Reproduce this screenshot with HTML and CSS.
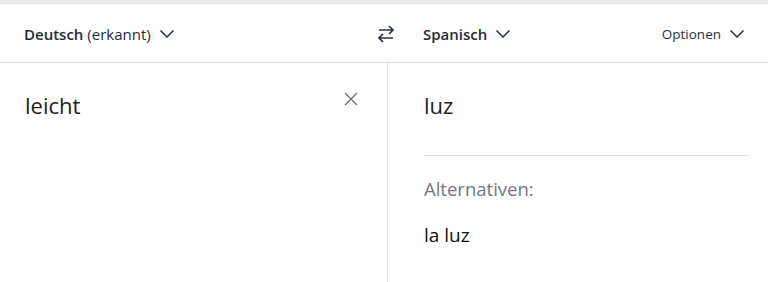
FILE: index.html
```html
<!DOCTYPE html>
<html lang="de">
<head>
<meta charset="utf-8">
<link rel="stylesheet" href="styles.css">
</head>
<body>
<div class="topbar"></div>
<header class="header">
  <div class="side left">
    <button class="lang"><span><b>Deutsch</b> (erkannt)</span>
      <svg class="chev" viewBox="0 0 16 16" width="16" height="16"><path d="M1.5 4.5 8 11l6.5-6.5" fill="none" stroke="currentColor" stroke-width="1.5"/></svg>
    </button>
    <button class="swap" aria-label="Tauschen">
      <svg viewBox="0 0 22 22" width="22" height="22"><path d="M4 7h14M14 3l4 4-4 4M18 15H4M8 11l-4 4 4 4" fill="none" stroke="currentColor" stroke-width="1.7"/></svg>
    </button>
  </div>
  <div class="side right">
    <button class="lang"><span><b>Spanisch</b></span>
      <svg class="chev" viewBox="0 0 16 16" width="16" height="16"><path d="M1.5 4.5 8 11l6.5-6.5" fill="none" stroke="currentColor" stroke-width="1.5"/></svg>
    </button>
    <button class="opts"><span>Optionen</span>
      <svg class="chev" viewBox="0 0 16 16" width="16" height="16"><path d="M1.5 4.5 8 11l6.5-6.5" fill="none" stroke="currentColor" stroke-width="1.5"/></svg>
    </button>
  </div>
</header>
<main class="panes">
  <section class="pane source">
    <div class="text">leicht</div>
    <button class="clear" aria-label="Löschen">
      <svg viewBox="0 0 16 16" width="16" height="16"><path d="M2 2l12 12M14 2 2 14" fill="none" stroke="currentColor" stroke-width="1.3"/></svg>
    </button>
  </section>
  <section class="pane target">
    <div class="text">luz</div>
    <hr class="sep">
    <div class="alt-label">Alternativen:</div>
    <div class="alt">la luz</div>
  </section>
</main>
</body>
</html>
```
FILE: styles.css
```css
* { box-sizing: border-box; }
html, body { margin: 0; padding: 0; background: #fff; }
body {
  font-family: "Open Sans", "Noto Sans", sans-serif;
  color: #1e2a3a;
  width: 768px;
  height: 282px;
  overflow: hidden;
}
button {
  font: inherit;
  color: inherit;
  background: none;
  border: 0;
  padding: 0;
  display: flex;
  align-items: center;
  cursor: pointer;
}
.topbar {
  height: 4px;
  background: linear-gradient(#e8e8e8, #f1f1f1);
  border-bottom: 1px solid #e2e2e2;
}
.header {
  display: flex;
  height: 59px;
  border-bottom: 1px solid #e1e1e1;
}
.side { display: flex; align-items: center; padding-top: 1px; }
.side.left { width: 388px; padding-left: 24px; justify-content: space-between; }
.side.right { flex: 1; padding-left: 35px; padding-right: 23px; justify-content: space-between; }
.lang { font-size: 15px; gap: 8px; }
.lang b { font-weight: 600; }
.swap { width: 24px; height: 24px; justify-content: center; margin-right: -10px; color: #2a3340; }
.opts { font-size: 13.5px; gap: 8px; color: #243040; }
.chev { color: #243040; }
.panes { display: flex; height: 219px; }
.pane.source {
  width: 388px;
  border-right: 1px solid #e1e1e1;
  padding: 26px 24px 0 25px;
  display: flex;
  justify-content: space-between;
  align-items: flex-start;
}
.pane.target { flex: 1; padding: 26px 19px 0 36px; }
.text { font-size: 22px; line-height: 32px; color: #222; }
.clear { color: #6a6f76; margin-top: 2px; margin-right: 4px; }
.sep { border: 0; border-top: 1px solid #e1e1e1; margin: 34px 0 0; }
.alt-label { font-size: 18.5px; color: #727885; margin-top: 20px; line-height: 26px; }
.alt { font-size: 19px; color: #111; margin-top: 20px; line-height: 26px; }
```
